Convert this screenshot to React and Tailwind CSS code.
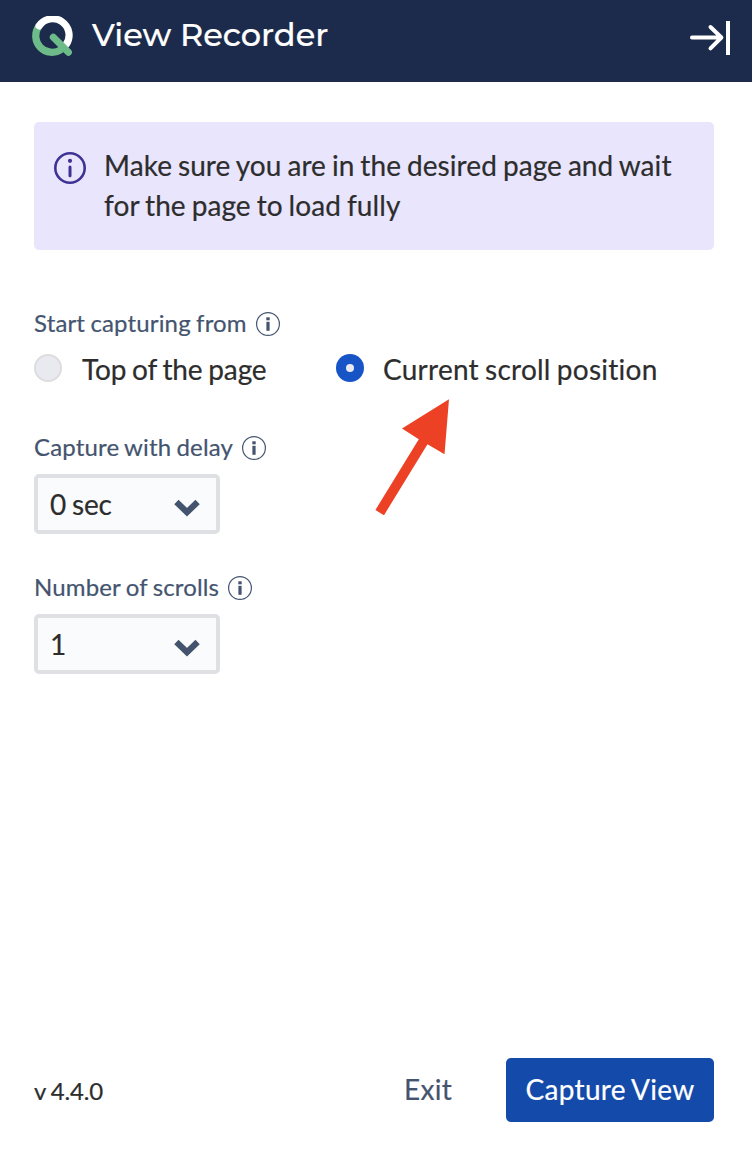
function Logo() {
  return (
    <svg width="44" height="44" viewBox="0 0 44 44" fill="none" strokeLinecap="round" className="mt-[2px] shrink-0">
      <path d="M9.1 9.9A16.4 16.4 0 0 0 31.4 33.4" stroke="#6dbb88" strokeWidth="7.2" strokeLinecap="butt" />
      <path d="M9.1 9.9A16.4 16.4 0 0 1 36.2 28.4" stroke="#fff" strokeWidth="7.2" />
      <path d="M23.3 21.3L38.4 36.2" stroke="#6dbb88" strokeWidth="7" />
    </svg>
  );
}

function NoticeIcon() {
  return (
    <svg width="32" height="32" viewBox="0 0 32 32" fill="none" className="shrink-0">
      <circle cx="16" cy="16" r="14.7" stroke="#3e3394" strokeWidth="2.6" />
      <circle cx="16" cy="8.8" r="2.1" fill="#3e3394" />
      <path d="M16 15V23.8" stroke="#3e3394" strokeWidth="3" strokeLinecap="round" />
    </svg>
  );
}

function HelpIcon() {
  return (
    <svg width="24" height="24" viewBox="0 0 24 24" fill="none" className="shrink-0">
      <circle cx="12" cy="12" r="11.4" stroke="#44546f" strokeWidth="1.2" />
      <rect x="10.3" y="5.3" width="3.4" height="3" fill="#44546f" />
      <rect x="10.4" y="9.8" width="3.2" height="9" fill="#44546f" />
    </svg>
  );
}

function FieldLabel({ children, className = "" }) {
  return (
    <div
      className={
        "flex h-6 items-center gap-[9px] text-2xl leading-6 tracking-[0.15px] text-[#44546f] [word-spacing:-1px] " +
        className
      }
    >
      <span className="-mt-[2px] whitespace-nowrap">{children}</span>
      <HelpIcon />
    </div>
  );
}

function Select({ value, className = "" }) {
  return (
    <button
      className={
        "flex h-[60px] w-[186px] items-center justify-between rounded-[5px] border-4 border-[#dfe0e4] bg-[#fafbfd] pl-3 pr-4 text-[28px] leading-10 tracking-[-0.1px] text-[#2d2d2d] [word-spacing:-1.3px] " +
        className
      }
    >
      <span>{value}</span>
      <svg width="26" height="18" viewBox="0 0 26 18" fill="none" className="mt-2">
        <path d="M2.4 3L13 13.2L23.6 3" stroke="#44546f" strokeWidth="6.2" />
      </svg>
    </button>
  );
}

export default function App() {
  return (
    <div className="flex h-[1152px] w-[752px] flex-col bg-white font-['Lato',sans-serif] [-webkit-text-stroke:0.2px]">
      <header className="flex h-[82px] shrink-0 items-start justify-between bg-[#1c2b4b] pl-[30px] pr-[21px] pt-[14px]">
        <div className="flex gap-[18px]">
          <Logo />
          <h1 className="whitespace-nowrap font-['Montserrat','Inter',sans-serif] text-[32px] font-medium leading-[42px] text-white">
            View Recorder
          </h1>
        </div>
        <svg width="42" height="36" viewBox="0 0 42 36" fill="none" stroke="#fff" className="mt-[6px]">
          <path d="M3 17.5H32M21.5 7L32.4 17.5L21.5 28.3" strokeWidth="4" strokeLinecap="round" strokeLinejoin="round" />
          <path d="M39 1V35" strokeWidth="4" />
        </svg>
      </header>

      <main className="flex flex-1 flex-col pl-[34px] pr-[38px] pt-10">
        <section className="flex h-32 gap-[18px] rounded-[5px] bg-[#e9e5fd] pl-5 pt-[24px]">
          <div className="pt-[6px]">
            <NoticeIcon />
          </div>
          <p className="-mt-[1px] whitespace-nowrap text-[28px] leading-10 tracking-[0.08px] text-[#2d2d2d] [word-spacing:-1.3px]">
            Make sure you are in the desired page and wait
            <br />
            for the page to load fully
          </p>
        </section>

        <FieldLabel className="mt-[62px]">Start capturing from</FieldLabel>
        <div className="mt-[14px] flex h-10 text-[28px] leading-10 text-[#2d2d2d] [word-spacing:-1.3px]">
          <label className="flex w-[302px] gap-5">
            <span className="mt-[4px] size-7 shrink-0 rounded-full border-2 border-[#dddddf] bg-[#e9eaf0]" />
            <span className="-mt-[1px] tracking-[-0.12px]">Top of the page</span>
          </label>
          <label className="relative flex gap-[19px]">
            <span className="mt-[4px] flex size-7 shrink-0 items-center justify-center rounded-full bg-[#1755c7]">
              <span className="size-2 rounded-full bg-[#e9eaf0]" />
            </span>
            <span className="-mt-[1px] whitespace-nowrap tracking-[0.25px]">Current scroll position</span>
            <svg width="76" height="118" viewBox="0 0 76 118" className="absolute left-[38px] top-[48px]">
              <path d="M75 1.2L70.5 56.2L53.5 46.2L10 117.2L1.4 112L44.8 41.2L28 30.5Z" fill="#ed4125" />
            </svg>
          </label>
        </div>

        <FieldLabel className="mt-[46px]">Capture with delay</FieldLabel>
        <Select value="0 sec" className="mt-[14px]" />

        <FieldLabel className="mt-[42px]">Number of scrolls</FieldLabel>
        <Select value="1" className="mt-[14px]" />

        <footer className="mb-[30px] mt-auto flex h-16 items-center">
          <span className="mt-[2px] text-2xl tracking-[-0.15px] text-[#2d2d2d] [word-spacing:-1px]">v 4.4.0</span>
          <button className="-mt-[2px] ml-auto mr-[54px] text-[28px] tracking-[0.3px] text-[#44546f]">Exit</button>
          <button className="h-16 w-52 rounded-[5px] bg-[#144aaa] pb-[2px] text-[28px] tracking-[0.3px] text-white [word-spacing:-1.3px]">
            Capture View
          </button>
        </footer>
      </main>
    </div>
  );
}
